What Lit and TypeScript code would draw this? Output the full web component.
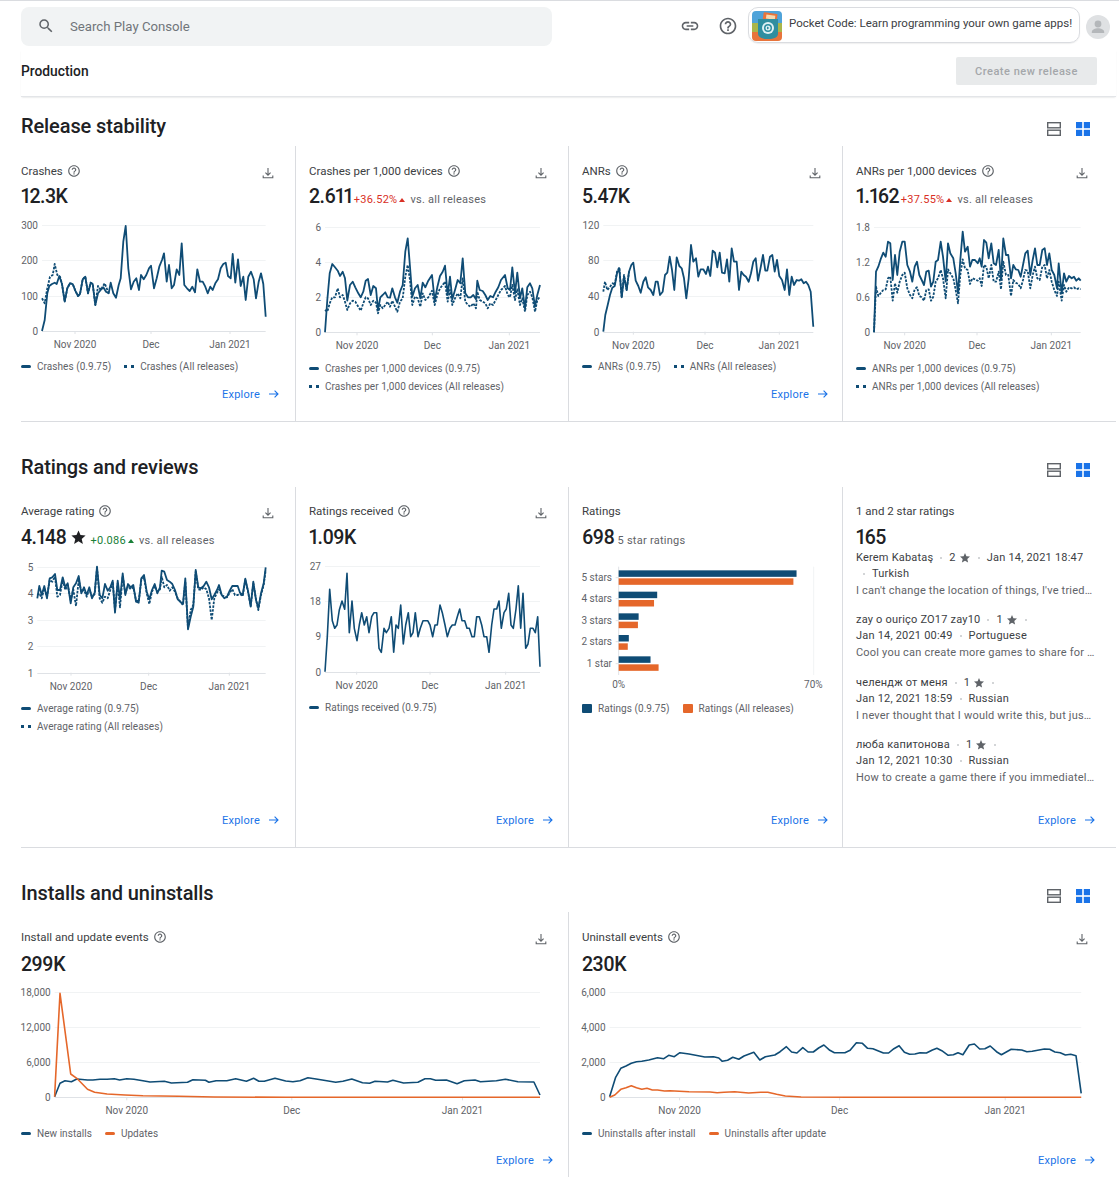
import { LitElement, html, css, svg, unsafeCSS } from "lit";
import { customElement } from "lit/decorators.js";

const BLUE = "#0f4c75";
const ORANGE = "#e5672a";

type Series = { pts: string; color?: string; dotted?: boolean; w?: number };
type Chart = {
  x0: number; y0: number; sx: number; sy: number;
  left: number; top: number; w: number; h: number;
  l: number; r: number;
  ys: [string, number][];
  xs: [string, number][];
  series: Series[];
};

const xy = (c: Chart, zx: number, zy: number): [number, number] => [
  zx / c.sx + c.x0 - c.left,
  zy / c.sy + c.y0 - c.top,
];

function chartSvg(c: Chart) {
  const [lx] = xy(c, c.l, 0);
  const [rx] = xy(c, c.r, 0);
  const base = xy(c, 0, c.ys[c.ys.length - 1][1])[1];
  return html`<svg class="chart" width=${c.w} height=${c.h} viewBox="0 0 ${c.w} ${c.h}">
    ${c.ys.map(([t, zy], i) => {
      const y = Math.round(xy(c, 0, zy)[1]) + 0.5;
      const last = i === c.ys.length - 1;
      return svg`<line x1=${lx} x2=${rx} y1=${y} y2=${y} stroke=${last ? "#dfe2e6" : "#f1f3f4"} stroke-width="1"/>
        <text class="lbl" x=${lx - 4} y=${y + 3.5} text-anchor="end">${t}</text>`;
    })}
    ${c.xs.map(([t, zx]) => {
      const x = xy(c, zx, 0)[0];
      return svg`<line x1=${x} x2=${x} y1=${base} y2=${base + 3} stroke="#dfe2e6"/>
        <text class="lbl" x=${x} y=${base + 17} text-anchor="middle">${t}</text>`;
    })}
    ${c.series.map((s) => {
      const pts = s.pts.trim().split(/\s+/).map((p) => {
        const [a, b] = p.split(",").map(Number);
        return xy(c, a, b).map((v) => v.toFixed(1)).join(",");
      }).join(" ");
      return svg`<polyline points=${pts} fill="none" stroke=${s.color ?? BLUE}
        stroke-width=${s.w ?? 1.8} stroke-linejoin="round"
        stroke-dasharray=${s.dotted ? "2.5 1.3" : "none"}/>`;
    })}
  </svg>`;
}

const C1: Chart = {
  x0: 0, y0: 210, sx: 3, sy: 3, left: 21, top: 209, w: 250, h: 146, l: 126, r: 797,
  ys: [["300", 45], ["200", 150], ["100", 258], ["0", 363]],
  xs: [["Nov 2020", 225], ["Dec", 453], ["Jan 2021", 690]],
  series: [
    { dotted: true, pts: "126,265 134,280 142,235 150,200 158,195 164,162 172,195 180,200 186,222 194,275 202,235 210,220 218,222 226,242 234,258 240,252 248,208 256,200 264,250 272,218 278,222 286,285 294,228 302,240 314,220 326,250" },
    { pts: "126,363 134,330 142,250 148,228 156,222 164,218 170,222 178,198 186,222 194,275 202,235 210,220 218,222 226,242 234,258 240,252 248,208 256,200 264,250 272,218 278,222 286,285 294,250 302,240 310,232 318,245 326,250 332,218 340,250 348,263 356,225 362,205 370,95 377,48 385,175 393,238 401,215 409,205 417,240 423,195 431,208 439,195 447,175 453,167 462,235 470,205 478,170 486,150 492,130 500,215 507,165 515,235 522,225 530,178 538,195 545,100 553,225 561,235 569,243 577,230 585,247 592,178 600,215 608,215 616,230 623,250 631,230 638,240 646,220 654,208 662,175 670,162 677,158 684,198 692,205 698,132 706,218 714,148 722,228 730,200 737,270 745,200 753,185 761,208 768,265 776,215 783,190 790,222 797,320" },
  ],
};
const C2: Chart = {
  x0: 295, y0: 210, sx: 3, sy: 3, left: 309, top: 209, w: 240, h: 148, l: 90, r: 735,
  ys: [["6", 50], ["4", 157], ["2", 262], ["0", 367]],
  xs: [["Nov 2020", 186], ["Dec", 412], ["Jan 2021", 643]],
  series: [
    { dotted: true, pts: "90,300 97,305 104,280 112,262 120,262 128,235 135,262 143,255 150,275 157,300 165,280 173,272 181,275 190,290 197,302 205,280 212,262 219,265 227,285 235,272 243,278 249,310 256,285 263,295 271,285 278,275 285,290 292,272 300,290 307,305 315,275 323,265 331,200 338,165 345,210 352,285 360,260 368,265 376,290 383,250 391,270 400,262 411,242 419,285 427,255 435,235 443,225 450,215 458,275 465,240 472,285 480,265 488,250 496,265 503,205 511,275 519,285 527,290 535,280 543,295 547,245 554,270 563,275 571,280 578,295 586,280 594,285 602,270 610,255 618,240 630,228 638,255 645,262 652,225 660,270 667,238 675,285 682,265 690,305 697,255 705,245 712,262 720,305 727,270 735,260" },
    { pts: "90,367 97,270 104,190 112,162 120,172 128,182 135,198 143,185 150,205 157,272 165,225 173,215 181,232 190,250 197,262 205,245 212,212 219,207 227,255 235,228 243,235 249,300 256,262 263,255 271,247 278,262 285,263 292,235 300,262 307,278 315,245 323,225 331,125 338,85 345,170 352,260 360,235 368,225 376,265 383,218 391,232 400,212 411,195 419,272 427,232 435,198 443,185 450,167 458,255 465,200 472,268 480,240 488,210 496,220 503,145 511,250 519,262 527,262 535,255 543,268 547,212 554,240 563,243 571,255 578,270 586,258 594,262 602,245 610,232 618,210 630,195 638,235 645,240 652,172 660,250 667,188 675,265 682,235 690,295 697,232 705,220 712,235 720,290 727,255 735,225" },
  ],
};
const C3: Chart = {
  x0: 570, y0: 210, sx: 3, sy: 3, left: 582, top: 209, w: 240, h: 146, l: 100, r: 730,
  ys: [["120", 45], ["80", 151], ["40", 258], ["0", 365]],
  xs: [["Nov 2020", 190], ["Dec", 405], ["Jan 2021", 628]],
  series: [
    { dotted: true, pts: "100,245 105,215 112,240 120,230 128,220 134,225 141,185 148,172 155,262 162,195 170,240 177,185" },
    { pts: "100,365 106,315 113,285 120,255 127,233 134,228 141,190 148,175 155,262 162,200 170,240 177,185 184,165 190,158 197,212 205,228 212,248 220,215 227,202 234,232 242,240 250,255 257,215 263,215 270,255 278,245 285,195 292,188 299,140 306,180 313,240 320,142 328,168 335,175 342,205 349,265 356,205 363,105 370,155 378,145 385,200 392,178 400,178 408,192 414,170 421,198 428,122 435,128 442,172 449,128 456,188 464,190 471,148 478,215 485,115 492,155 500,155 507,240 514,185 521,195 528,200 536,215 543,190 550,155 557,145 564,212 572,172 579,135 586,182 592,182 600,140 607,135 614,185 621,150 628,198 636,210 644,240 651,178 658,255 665,200 672,225 680,210 687,212 694,208 701,220 708,215 715,225 722,245 730,350" },
  ],
};
const C4: Chart = {
  x0: 845, y0: 210, sx: 3, sy: 3, left: 856, top: 209, w: 240, h: 148, l: 87, r: 707,
  ys: [["1.8", 50], ["1.2", 157], ["0.6", 262], ["0", 367]],
  xs: [["Nov 2020", 179], ["Dec", 396], ["Jan 2021", 619]],
  series: [
    { dotted: true, pts: "87,367 93,230 100,258 108,248 115,240 122,238 129,205 136,200 143,272 150,220 157,248 164,215 172,195 179,188 187,235 195,255 202,265 209,238 216,232 223,258 230,262 237,272 244,240 251,238 258,272 265,260 272,215 279,205 287,180 294,205 302,265 309,178 316,190 325,205 332,240 339,280 346,195 353,148 360,175 368,180 375,222 382,205 390,208 398,212 404,205 410,228 417,165 424,170 431,205 439,165 446,215 453,215 461,185 468,238 475,155 483,195 490,195 498,258 505,210 512,218 520,222 527,235 534,210 541,180 548,182 556,235 563,195 570,170 577,205 584,210 592,170 599,165 606,205 613,180 620,215 628,240 636,258 641,215 650,272 657,225 664,245 672,232 680,235 687,232 694,238 701,235 707,238" },
    { pts: "87,367 93,185 100,170 108,145 115,128 122,140 129,95 136,100 143,210 150,135 157,195 164,125 172,95 179,95 187,165 195,185 202,215 209,170 216,155 223,195 230,210 237,225 244,185 251,182 258,230 265,215 272,155 279,150 287,95 294,140 302,215 309,100 316,130 325,145 332,190 339,250 346,150 353,65 360,125 368,110 375,170 382,150 390,150 398,160 404,145 410,170 417,90 424,98 431,145 439,100 446,160 453,165 461,120 468,210 475,85 483,135 490,135 498,205 505,165 512,178 520,180 527,200 534,165 541,130 548,122 556,195 563,150 570,115 577,165 584,165 592,120 599,115 606,165 613,130 620,180 628,195 636,235 641,160 650,250 657,190 664,215 672,198 680,205 687,200 694,212 701,205 707,212" },
  ],
};
const R1: Chart = {
  x0: 0, y0: 500, sx: 3, sy: 3, left: 21, top: 550, w: 250, h: 147, l: 112, r: 797,
  ys: [["5", 200], ["4", 280], ["3", 359], ["2", 438], ["1", 518]],
  xs: [["Nov 2020", 213], ["Dec", 446], ["Jan 2021", 688]],
  series: [
    { dotted: true, pts: "112,285 118,280 125,295 133,265 141,290 149,240 157,245 165,230 172,290 180,285 188,240 196,270 203,255 212,300 220,268 228,318 236,240 244,275 252,270 260,290 268,268 276,290 284,282 291,205 299,295 307,308 315,290 323,295 331,270 338,245 345,330 353,250 360,322 368,228 376,280 384,258 392,268 400,262 408,300 416,305 424,240 432,232 440,280 448,312 456,275 464,258 472,275 480,268 485,230 493,262 501,255 509,272 517,262 525,275 533,295 541,305 549,315 556,245 564,385 572,330 580,315 587,215 595,268 603,270 611,262 619,268 627,295 635,360 643,295 651,278 657,268 665,285 673,290 681,292 689,278 697,268 705,285 713,285 720,282 728,288 736,240 744,275 752,318 760,250 768,298 775,330 783,285 791,255 797,210" },
    { pts: "112,295 118,258 125,285 133,258 141,295 149,235 157,232 165,222 172,270 180,270 188,232 196,262 203,250 212,310 220,262 228,250 236,228 244,280 252,262 260,285 268,262 276,295 284,278 291,200 299,285 307,295 315,252 323,272 331,262 338,242 345,338 353,242 360,298 368,220 376,285 384,252 392,262 400,255 408,305 416,308 424,235 432,225 440,275 448,298 456,270 464,252 472,280 480,262 485,212 493,215 501,240 509,245 517,252 525,270 533,298 541,305 549,312 556,235 564,388 572,350 580,320 587,210 595,262 603,265 611,258 619,245 627,262 635,298 643,285 651,270 657,255 665,285 673,295 681,290 689,272 697,258 705,258 713,258 720,278 728,285 736,236 744,272 752,320 760,245 768,300 775,325 783,280 791,250 797,202" },
  ],
};
const R2: Chart = {
  x0: 295, y0: 500, sx: 3, sy: 3, left: 309, top: 550, w: 240, h: 146, l: 90, r: 735,
  ys: [["27", 197], ["18", 303], ["9", 409], ["0", 515]],
  xs: [["Nov 2020", 185], ["Dec", 405], ["Jan 2021", 632]],
  series: [
    { w: 1.6, pts: "90,515 97,410 104,268 112,362 119,385 126,375 133,330 141,303 149,328 156,220 163,398 171,303 178,385 186,422 193,375 200,338 208,375 215,350 222,398 230,350 237,338 245,338 252,445 259,457 267,385 274,398 282,385 289,350 296,457 303,375 310,385 317,315 325,432 332,375 340,338 347,410 354,398 361,338 369,410 376,385 384,362 398,362 405,375 413,410 420,375 427,375 435,315 442,338 450,375 457,410 465,385 472,375 480,375 487,350 494,327 501,362 509,362 516,385 523,385 531,410 538,410 545,350 553,350 560,375 567,410 575,410 582,457 590,375 597,327 605,327 612,303 619,385 627,338 634,327 641,280 648,375 655,385 663,327 670,257 677,385 684,280 692,445 699,432 706,385 714,385 721,398 728,350 735,500" },
  ],
};
const I1: Chart = {
  x0: 0, y0: 920, sx: 2.8, sy: 3, left: 21, top: 975, w: 530, h: 147, l: 153, r: 1512,
  ys: [["18,000", 215], ["12,000", 322], ["6,000", 427], ["0", 532]],
  xs: [["Nov 2020", 355], ["Dec", 817], ["Jan 2021", 1295]],
  series: [
    { w: 1.6, pts: "153,530 168,490 182,482 200,485 215,477 245,480 260,480 280,478 300,478 320,476 335,480 355,476 375,478 400,482 420,486 460,484 480,489 525,487 540,479 575,481 585,487 605,482 635,482 660,476 690,484 710,475 725,484 740,484 770,475 800,483 820,485 840,482 862,473 885,477 915,482 940,487 960,484 985,477 1015,488 1035,490 1050,484 1085,486 1100,481 1130,489 1170,487 1190,476 1205,476 1220,481 1250,480 1280,491 1300,482 1330,480 1345,485 1390,482 1415,478 1450,485 1495,486 1512,525" },
    { w: 1.6, color: ORANGE, pts: "153,530 168,220 198,462 215,475 245,508 265,517 300,522 350,525 400,527 500,529 600,531 800,532 1512,532" },
  ],
};
const I2: Chart = {
  x0: 570, y0: 920, sx: 2.856, sy: 3, left: 582, top: 975, w: 510, h: 147, l: 113, r: 1460,
  ys: [["6,000", 215], ["4,000", 322], ["2,000", 427], ["0", 532]],
  xs: [["Nov 2020", 313], ["Dec", 770], ["Jan 2021", 1243]],
  series: [
    { w: 1.6, pts: "113,530 130,473 145,445 160,438 175,430 190,425 205,424 225,420 250,413 268,416 282,406 298,410 314,398 340,402 370,408 385,411 410,410 425,414 435,424 450,421 465,412 482,418 497,408 525,397 542,420 558,410 585,405 600,395 618,380 633,396 648,399 665,383 680,396 695,396 710,384 725,375 742,391 755,398 785,398 800,391 818,368 835,370 850,385 865,386 895,399 910,399 925,386 940,377 955,397 970,403 985,402 1000,398 1018,399 1035,390 1048,385 1062,392 1080,406 1095,404 1108,398 1122,404 1140,375 1155,372 1170,387 1185,386 1200,378 1218,395 1232,404 1260,388 1290,390 1305,395 1320,394 1355,387 1370,388 1385,396 1400,398 1415,405 1430,403 1445,407 1460,520" },
    { w: 1.6, color: ORANGE, pts: "113,532 128,525 145,508 160,503 175,497 190,503 205,508 220,505 235,510 250,510 270,513 285,512 340,515 400,516 420,518 440,517 470,515 510,519 545,517 565,517 590,523 615,528 660,531 800,532 1460,532" },
  ],
};

function barsSvg() {
  const fx = (z: number) => z / 2.856 + 570 - 582;
  const fy = (z: number) => z / 3 + 500 - 550;
  const rows: [string, number, number, number, number, number][] = [
    ["5 stars", 233, 211, 647, 235, 638],
    ["4 stars", 296, 275, 249, 300, 240],
    ["3 stars", 362, 340, 196, 365, 194],
    ["2 stars", 425, 405, 168, 430, 165],
    ["1 star", 491, 469, 230, 493, 253],
  ];
  const z0 = fx(139);
  return html`<svg class="chart" width="250" height="147" viewBox="0 0 250 147">
    <line x1=${z0} x2=${z0} y1=${fy(200)} y2=${fy(525)} stroke="#dfe2e6"/>
    <line x1=${fx(696)} x2=${fx(696)} y1=${fy(200)} y2=${fy(525)} stroke="#f1f3f4"/>
    ${rows.map(([t, ly, by, bx, oy, ox]) => svg`
      <text class="lbl" x=${fx(120)} y=${fy(ly) + 3.5} text-anchor="end">${t}</text>
      <line x1=${z0 - 3} x2=${z0} y1=${fy(ly)} y2=${fy(ly)} stroke="#dfe2e6"/>
      <rect x=${z0} y=${fy(by)} width=${fx(bx) - z0} height="6.5" fill=${BLUE}/>
      <rect x=${z0} y=${fy(oy)} width=${fx(ox) - z0} height="6.5" fill=${ORANGE}/>`)}
    <text class="lbl" x=${z0} y=${fy(553) + 3.5} text-anchor="middle">0%</text>
    <text class="lbl" x=${fx(695)} y=${fy(553) + 3.5} text-anchor="middle">70%</text>
  </svg>`;
}

const helpI = html`<svg class="help" viewBox="0 0 24 24"><path d="M11 18h2v-2h-2v2zm1-16C6.48 2 2 6.48 2 12s4.48 10 10 10 10-4.48 10-10S17.52 2 12 2zm0 18c-4.41 0-8-3.59-8-8s3.59-8 8-8 8 3.59 8 8-3.59 8-8 8zm0-14c-2.21 0-4 1.79-4 4h2c0-1.1.9-2 2-2s2 .9 2 2c0 2-3 1.75-3 5h2c0-2.25 3-2.5 3-5 0-2.21-1.79-4-4-4z"/></svg>`;
const dlI = html`<svg class="dl" viewBox="0 0 12 12" fill="none" stroke="#5f6368" stroke-width="1.1"><path d="M6 1v7M3.4 5.6 6 8.2l2.6-2.6M1.2 8.5v2.2h9.6V8.5"/></svg>`;
const arrowI = html`<svg class="arrow" viewBox="0 0 10 10" fill="none" stroke="#1a73e8" stroke-width="1.1"><path d="M0 5h9M5.6 1.6 9 5 5.6 8.4"/></svg>`;
const starI = (c: string) => html`<svg class="star" viewBox="0 0 24 24" fill=${c}><path d="M12 17.27 18.18 21l-1.64-7.03L22 9.24l-7.19-.61L12 2 9.19 8.63 2 9.24l5.46 4.73L5.82 21z"/></svg>`;
const tri = (cls: string) => html`<span class="tri ${cls}"></span>`;

const legend = (items: [string, string][], rows = false) => html`<div class="legend ${rows ? "rows" : ""}">
  ${items.map(([k, t]) => html`<span class="li"><i class="sw ${k}"></i>${t}</span>`)}
</div>`;

const explore = html`<a class="explore">Explore ${arrowI}</a>`;

type Rev = { name: string; stars: string; date: string; lang: string; text: string };
const reviews: Rev[] = [
  { name: "Kerem Kabataş", stars: "2", date: "Jan 14, 2021 18:47", lang: "Turkish", text: "I can't change the location of things, I've tried…" },
  { name: "zay o ouriço ZO17 zay10", stars: "1", date: "Jan 14, 2021 00:49", lang: "Portuguese", text: "Cool you can create more games to share for …" },
  { name: "челендж от меня", stars: "1", date: "Jan 12, 2021 18:59", lang: "Russian", text: "I never thought that I would write this, but jus…" },
  { name: "люба капитонова", stars: "1", date: "Jan 12, 2021 10:30", lang: "Russian", text: "How to create a game there if you immediatel…" },
];

const cB = unsafeCSS(BLUE);
const cO = unsafeCSS(ORANGE);

@customElement("app-root")
export class AppRoot extends LitElement {
  static styles = css`
    :host { display: block; width: 1119px; height: 1177px; overflow: hidden; background: #fff; color: #202124;
      font-family: Roboto, "Noto Sans CJK SC", sans-serif; border-top: 1px solid #dadce0; box-sizing: border-box; }
    .top { display: flex; align-items: flex-start; height: 49px; padding: 6px 0 0 21px; box-sizing: border-box; }
    .search { width: 531px; height: 39px; border-radius: 8px; background: #f1f3f4; display: flex; align-items: center;
      box-sizing: border-box; padding: 0 0 1px 16px; color: #70757a; font-size: 13.2px; gap: 15px; }
    .search svg { width: 18px; height: 18px; fill: #5f6368; }
    .ico { width: 20px; height: 20px; fill: #5f6368; flex: none; margin-top: 9px; }
    .ico.link { margin-left: 128px; }
    .ico.q { margin-left: 18px; }
    .pill { margin-left: 10px; width: 332px; height: 36px; box-sizing: border-box; border: 1px solid #dadce0; border-radius: 10px;
      display: flex; align-items: flex-start; gap: 7px; padding: 3px 0 0 3px; font-size: 11.5px; letter-spacing: 0; color: #3c4043; white-space: nowrap; box-shadow: 0 1px 1px rgba(60,64,67,.08); }
    .pill span { margin-top: 5px; line-height: 14px; }
    .pill svg { width: 30px; height: 30px; flex: none; }
    .avatar { width: 24px; height: 24px; margin: 8px 0 0 6px; flex: none; }
    .sub { display: flex; justify-content: space-between; align-items: flex-start; height: 47px; margin: 0 3px 0 21px; padding-right: 19px; box-shadow: 0 1px 2px -1px rgba(60,64,67,.25); border-bottom: 1px solid #e3e5e8; box-sizing: border-box; }
    .prod { font-size: 13.8px; font-weight: 500; line-height: 20px; margin-top: 11px; color: #202124; }
    .create { width: 141px; height: 28px; margin-top: 7px; background: #e8eaeb; border-radius: 2px; color: #a4a7aa; font-size: 11px; font-weight: 500; letter-spacing: .5px; display: flex; align-items: center; justify-content: center; }

    section { margin: 0 3px 0 21px; }
    .s1 { padding-top: 17px; border-bottom: 1px solid #dadce0; }
    .s2 { padding-top: 33px; border-bottom: 1px solid #dadce0; }
    .s3 { padding-top: 33px; }
    .head { display: flex; justify-content: space-between; align-items: center; height: 24px; margin-bottom: 8px; padding-right: 26px; }
    .s3 .head { margin-bottom: 7px; }
    h2 { margin: 0; font-size: 20px; font-weight: 500; color: #202124; letter-spacing: -.1px; }
    .views { display: flex; gap: 15px; margin-top: 6px; }
    .views svg { width: 14px; height: 14px; display: block; }
    .grid { display: grid; grid-template-columns: 275px 273px 274px 273px; }
    .s1 .grid { height: 275px; }
    .s2 .grid { height: 360px; }
    .s3 .grid { grid-template-columns: 548px 547px; height: 265px; }

    .card { display: flex; flex-direction: column; border-right: 1px solid #dadce0; padding: 15px 21px 20px 13px; box-sizing: border-box; min-width: 0; }
    .s2 .card { padding-top: 14px; }
    .card.first { padding-left: 0; }
    .card.last { border-right: 0; padding-right: 28px; }
    .s3 .card { padding-bottom: 10px; }
    .title { display: flex; align-items: center; height: 20px; font-size: 11.5px; letter-spacing: 0; color: #3c4043; gap: 4px; white-space: nowrap; }
    .help { width: 14px; height: 14px; fill: #5f6368; }
    .dl { width: 12px; height: 12px; margin-left: auto; margin-top: 3px; }
    .value { display: flex; align-items: baseline; height: 26px; box-sizing: border-box; padding-top: 1px; line-height: 26px; margin-top: 2px; font-size: 11px; letter-spacing: .25px; color: #5f6368; white-space: nowrap; }
    .s2 .value { margin-top: 3px; }
    .s3 .value { padding-top: 3px; }
    .big { font-size: 19.5px; font-weight: 500; color: #202124; letter-spacing: -.5px; margin-right: 3px; font-variant-numeric: proportional-nums; font-feature-settings: "pnum"; }
    .value .star { width: 17px; height: 17px; margin: 0 4px 0 0; align-self: center; }
    .red { color: #d93025; margin-left: -1.5px; } .green { color: #188038; }
    .tri { width: 0; height: 0; border-left: 3px solid transparent; border-right: 3px solid transparent; margin: 7px 5px 0 2px; align-self: center; }
    .tri.r { border-bottom: 4px solid #d93025; } .tri.g { border-bottom: 4px solid #188038; }
    .chart { display: block; overflow: visible; flex: none; }
    .chart .lbl { font: 400 10px Roboto, sans-serif; fill: #5f6368; }
    .legend { display: flex; gap: 13px; margin-top: 2px; font-size: 10px; letter-spacing: .05px; color: #5f6368; white-space: nowrap; }
    .legend.rows { flex-direction: column; gap: 0; }
    .li { display: flex; align-items: center; height: 18px; }
    .sw { display: block; width: 10px; height: 3px; margin-right: 6px; background: ${cB}; border-radius: 2px; flex: none; }
    .sw.o { background: ${cO}; }
    .sw.d { background: linear-gradient(90deg, ${cB} 0 3px, transparent 3px 7px, ${cB} 7px 10px); border-radius: 0; }
    .sw.sq { height: 9px; border-radius: 1px; }
    .explore { margin-top: auto; display: flex; align-items: center; justify-content: flex-end; height: 14px; color: #1a73e8; font-size: 11px; letter-spacing: .25px; gap: 9px; margin-right: -6px; }
    .card:nth-child(3) .explore { margin-right: -7px; }
    .card.first .explore { margin-right: -5px; }
    .s3 .card.first .explore { margin-right: -6px; }
    .card.last .explore { margin-right: -7px; }
    .arrow { width: 10px; height: 10px; }
    .reviews { display: flex; flex-direction: column; gap: 12.4px; width: 239px; font-size: 11px; letter-spacing: .2px; color: #3c4043; }
    .meta { display: flex; flex-wrap: wrap; align-items: center; line-height: 16px; }
    .meta .dot { width: 2px; height: 2px; margin: 0 7px; border-radius: 50%; background: #c4c7ca; }
    .meta .st { display: flex; align-items: center; gap: 3px; }
    .meta .star { width: 12px; height: 12px; margin: 0; }
    .rtext { line-height: 18px; white-space: nowrap; color: #5f6368; }
  `;

  render() {
    const listI = html`<svg viewBox="0 0 14 14" fill="none" stroke="#5f6368" stroke-width="1.4"><rect x=".7" y=".7" width="12.6" height="5.1"/><rect x=".7" y="8.2" width="12.6" height="5.1"/></svg>`;
    const gridI = html`<svg viewBox="0 0 14 14" fill="#1a73e8"><rect width="6.2" height="6.2"/><rect x="7.8" width="6.2" height="6.2"/><rect y="7.8" width="6.2" height="6.2"/><rect x="7.8" y="7.8" width="6.2" height="6.2"/></svg>`;
    const views = html`<div class="views">${listI}${gridI}</div>`;
    return html`
      <div class="top">
        <div class="search">
          <svg viewBox="0 0 24 24"><path d="M15.5 14h-.79l-.28-.27A6.471 6.471 0 0 0 16 9.5 6.5 6.5 0 1 0 9.5 16c1.61 0 3.09-.59 4.23-1.57l.27.28v.79l5 4.99L20.49 19l-4.99-5zm-6 0C7.01 14 5 11.99 5 9.5S7.01 5 9.5 5 14 7.01 14 9.5 11.99 14 9.5 14z"/></svg>
          Search Play Console
        </div>
        <svg class="ico link" viewBox="0 0 24 24"><path d="M3.9 12c0-1.71 1.39-3.1 3.1-3.1h4V7H7c-2.76 0-5 2.24-5 5s2.24 5 5 5h4v-1.9H7c-1.71 0-3.1-1.39-3.1-3.1zM8 13h8v-2H8v2zm9-6h-4v1.9h4c1.71 0 3.1 1.39 3.1 3.1s-1.39 3.1-3.1 3.1h-4V17h4c2.76 0 5-2.24 5-5s-2.24-5-5-5z"/></svg>
        <svg class="ico q" viewBox="0 0 24 24"><path d="M11 18h2v-2h-2v2zm1-16C6.48 2 2 6.48 2 12s4.48 10 10 10 10-4.48 10-10S17.52 2 12 2zm0 18c-4.41 0-8-3.59-8-8s3.59-8 8-8 8 3.59 8 8-3.59 8-8 8zm0-14c-2.21 0-4 1.79-4 4h2c0-1.1.9-2 2-2s2 .9 2 2c0 2-3 1.75-3 5h2c0-2.25 3-2.5 3-5 0-2.21-1.79-4-4-4z"/></svg>
        <div class="pill">
          <svg viewBox="0 0 30 30">
            <defs><clipPath id="ac"><rect width="30" height="30" rx="4"/></clipPath></defs>
            <g clip-path="url(#ac)">
              <rect width="30" height="12" fill="#4fa3d9"/><rect y="12" width="30" height="9" fill="#a9b64a"/><rect y="21" width="30" height="9" fill="#e8743b"/>
              <rect x="11" y="2" width="14" height="10" rx="1" fill="#e8743b" transform="rotate(8 18 7)"/>
              <rect x="14" y="4" width="9" height="4" fill="#f6d9b0" transform="rotate(8 18 7)"/>
              <path d="M6 8h20v15c0 3-4 5-10 5S6 26 6 23z" fill="#2f8ea0"/>
              <circle cx="16" cy="17" r="6" fill="#dff1f4"/><circle cx="16" cy="17" r="4" fill="#2f8ea0"/><circle cx="16" cy="17" r="2.5" fill="#dff1f4"/><path d="M15 15.5v3l2.4-1.5z" fill="#2f8ea0"/>
            </g>
          </svg>
          <span>Pocket Code: Learn programming your own game apps!</span>
        </div>
        <svg class="avatar" viewBox="0 0 24 24"><circle cx="12" cy="12" r="12" fill="#dfe1e3"/><circle cx="12" cy="9" r="3.4" fill="#b4b7ba"/><path d="M5.8 17c0-2.6 3.6-3.8 6.2-3.8s6.2 1.2 6.2 3.8v1H5.8z" fill="#b4b7ba"/></svg>
      </div>
      <div class="sub">
        <div class="prod">Production</div>
        <div class="create">Create new release</div>
      </div>

      <section class="s1">
        <div class="head"><h2>Release stability</h2>${views}</div>
        <div class="grid">
          <div class="card first">
            <div class="title">Crashes ${helpI}${dlI}</div>
            <div class="value"><span class="big">12.3K</span></div>
            ${chartSvg(C1)}
            ${legend([["", "Crashes (0.9.75)"], ["d", "Crashes (All releases)"]])}
            ${explore}
          </div>
          <div class="card">
            <div class="title">Crashes per 1,000 devices ${helpI}${dlI}</div>
            <div class="value"><span class="big">2.611</span><span class="red">+36.52%</span>${tri("r")}<span>vs. all releases</span></div>
            ${chartSvg(C2)}
            ${legend([["", "Crashes per 1,000 devices (0.9.75)"], ["d", "Crashes per 1,000 devices (All releases)"]], true)}
          </div>
          <div class="card">
            <div class="title">ANRs ${helpI}${dlI}</div>
            <div class="value"><span class="big">5.47K</span></div>
            ${chartSvg(C3)}
            ${legend([["", "ANRs (0.9.75)"], ["d", "ANRs (All releases)"]])}
            ${explore}
          </div>
          <div class="card last">
            <div class="title">ANRs per 1,000 devices ${helpI}${dlI}</div>
            <div class="value"><span class="big">1.162</span><span class="red">+37.55%</span>${tri("r")}<span>vs. all releases</span></div>
            ${chartSvg(C4)}
            ${legend([["", "ANRs per 1,000 devices (0.9.75)"], ["d", "ANRs per 1,000 devices (All releases)"]], true)}
          </div>
        </div>
      </section>

      <section class="s2">
        <div class="head"><h2>Ratings and reviews</h2>${views}</div>
        <div class="grid">
          <div class="card first">
            <div class="title">Average rating ${helpI}${dlI}</div>
            <div class="value"><span class="big">4.148</span>${starI("#202124")}<span class="green">+0.086</span>${tri("g")}<span>vs. all releases</span></div>
            ${chartSvg(R1)}
            ${legend([["", "Average rating (0.9.75)"], ["d", "Average rating (All releases)"]], true)}
            ${explore}
          </div>
          <div class="card">
            <div class="title">Ratings received ${helpI}${dlI}</div>
            <div class="value"><span class="big">1.09K</span></div>
            ${chartSvg(R2)}
            ${legend([["", "Ratings received (0.9.75)"]])}
            ${explore}
          </div>
          <div class="card">
            <div class="title">Ratings</div>
            <div class="value"><span class="big">698</span><span>5 star ratings</span></div>
            ${barsSvg()}
            ${legend([["sq", "Ratings (0.9.75)"], ["sq o", "Ratings (All releases)"]])}
            ${explore}
          </div>
          <div class="card last">
            <div class="title">1 and 2 star ratings</div>
            <div class="value"><span class="big">165</span></div>
            <div class="reviews">
              ${reviews.map((r) => html`<div>
                <div class="meta">
                  <span>${r.name}</span><i class="dot"></i>
                  <span class="st">${r.stars} ${starI("#5f6368")}</span><i class="dot"></i>
                  <span>${r.date}</span><i class="dot"></i>
                  <span>${r.lang}</span>
                </div>
                <div class="rtext">${r.text}</div>
              </div>`)}
            </div>
            ${explore}
          </div>
        </div>
      </section>

      <section class="s3">
        <div class="head"><h2>Installs and uninstalls</h2>${views}</div>
        <div class="grid">
          <div class="card first">
            <div class="title">Install and update events ${helpI}${dlI}</div>
            <div class="value"><span class="big">299K</span></div>
            ${chartSvg(I1)}
            ${legend([["", "New installs"], ["o", "Updates"]])}
            ${explore}
          </div>
          <div class="card last">
            <div class="title">Uninstall events ${helpI}${dlI}</div>
            <div class="value"><span class="big">230K</span></div>
            ${chartSvg(I2)}
            ${legend([["", "Uninstalls after install"], ["o", "Uninstalls after update"]])}
            ${explore}
          </div>
        </div>
      </section>
    `;
  }
}
